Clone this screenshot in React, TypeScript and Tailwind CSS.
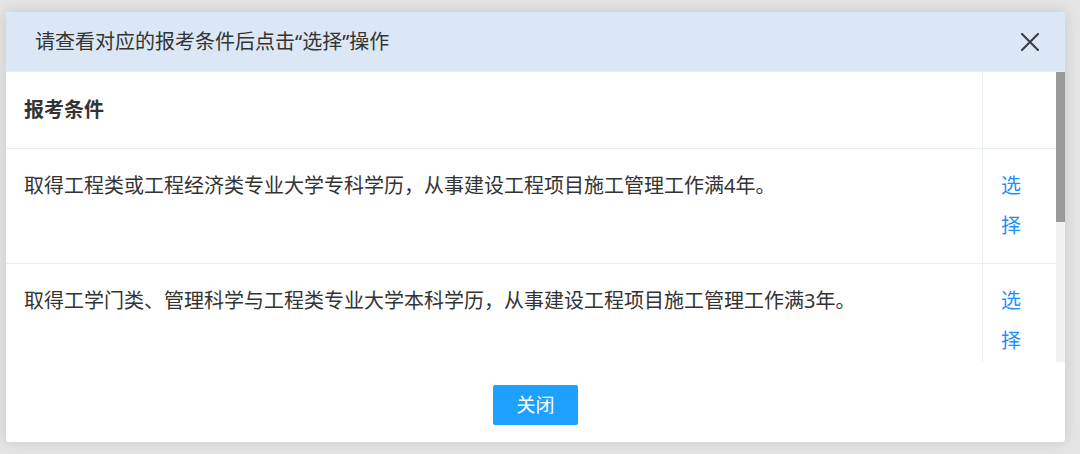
const rows = [
  '取得工程类或工程经济类专业大学专科学历，从事建设工程项目施工管理工作满4年。',
  '取得工学门类、管理科学与工程类专业大学本科学历，从事建设工程项目施工管理工作满3年。',
];

export default function App() {
  return (
    <div
      className="w-[1080px] h-[454px] bg-[#e4e4e4] pl-[6px] pt-[12px] overflow-hidden"
      style={{ fontFamily: '"Noto Sans", "Noto Sans CJK SC", sans-serif' }}
    >
      <div className="w-[1059px] h-[430px] bg-white rounded-[3px] shadow-[0_0_14px_rgba(0,0,0,0.12)] flex flex-col overflow-hidden">
        {/* title bar */}
        <div className="h-[60px] shrink-0 bg-[#dbe7f4] border-b border-[#e6edf4] flex items-center justify-between pl-[29px] pr-[26px]">
          <span className="text-[20px] text-[#333]">请查看对应的报考条件后点击“选择”操作</span>
          <svg width="18" height="18" viewBox="0 0 18 18" className="text-[#3a3d48]">
            <path d="M1 1 L17 17 M17 1 L1 17" stroke="currentColor" strokeWidth="2.1" strokeLinecap="round" />
          </svg>
        </div>

        {/* table + scrollbar */}
        <div className="h-[290px] shrink-0 flex overflow-hidden">
          <div className="flex-1 flex flex-col text-[20px] text-[#333]">
            <div className="flex border-b border-[#e8eef3]">
              <div className="flex-1 pl-[18px] h-[76px] flex items-center font-bold">报考条件</div>
              <div className="w-[74px] border-l border-[#e8eef3]" />
            </div>
            {rows.map((text, i) => (
              <div key={i} className="flex border-b border-[#e8eef3] shrink-0">
                <div className="flex-1 pl-[18px] pt-[17px] pb-[17px] leading-[40px]">{text}</div>
                <div className="w-[74px] border-l border-[#e8eef3] pl-[18px] pr-[18px] pt-[17px] pb-[17px] leading-[40px] text-[#1e8fff] break-all">
                  选择
                </div>
              </div>
            ))}
          </div>
          <div className="w-[9px] bg-[#f1f1f1] flex flex-col">
            <div className="h-[150px] bg-[#999]" />
          </div>
        </div>

        {/* footer */}
        <div className="flex-1 flex justify-center pt-[23px]">
          <button className="w-[85px] h-[40px] rounded-[2px] bg-[#1ea0ff] text-white text-[19px]">关闭</button>
        </div>
      </div>
    </div>
  );
}
